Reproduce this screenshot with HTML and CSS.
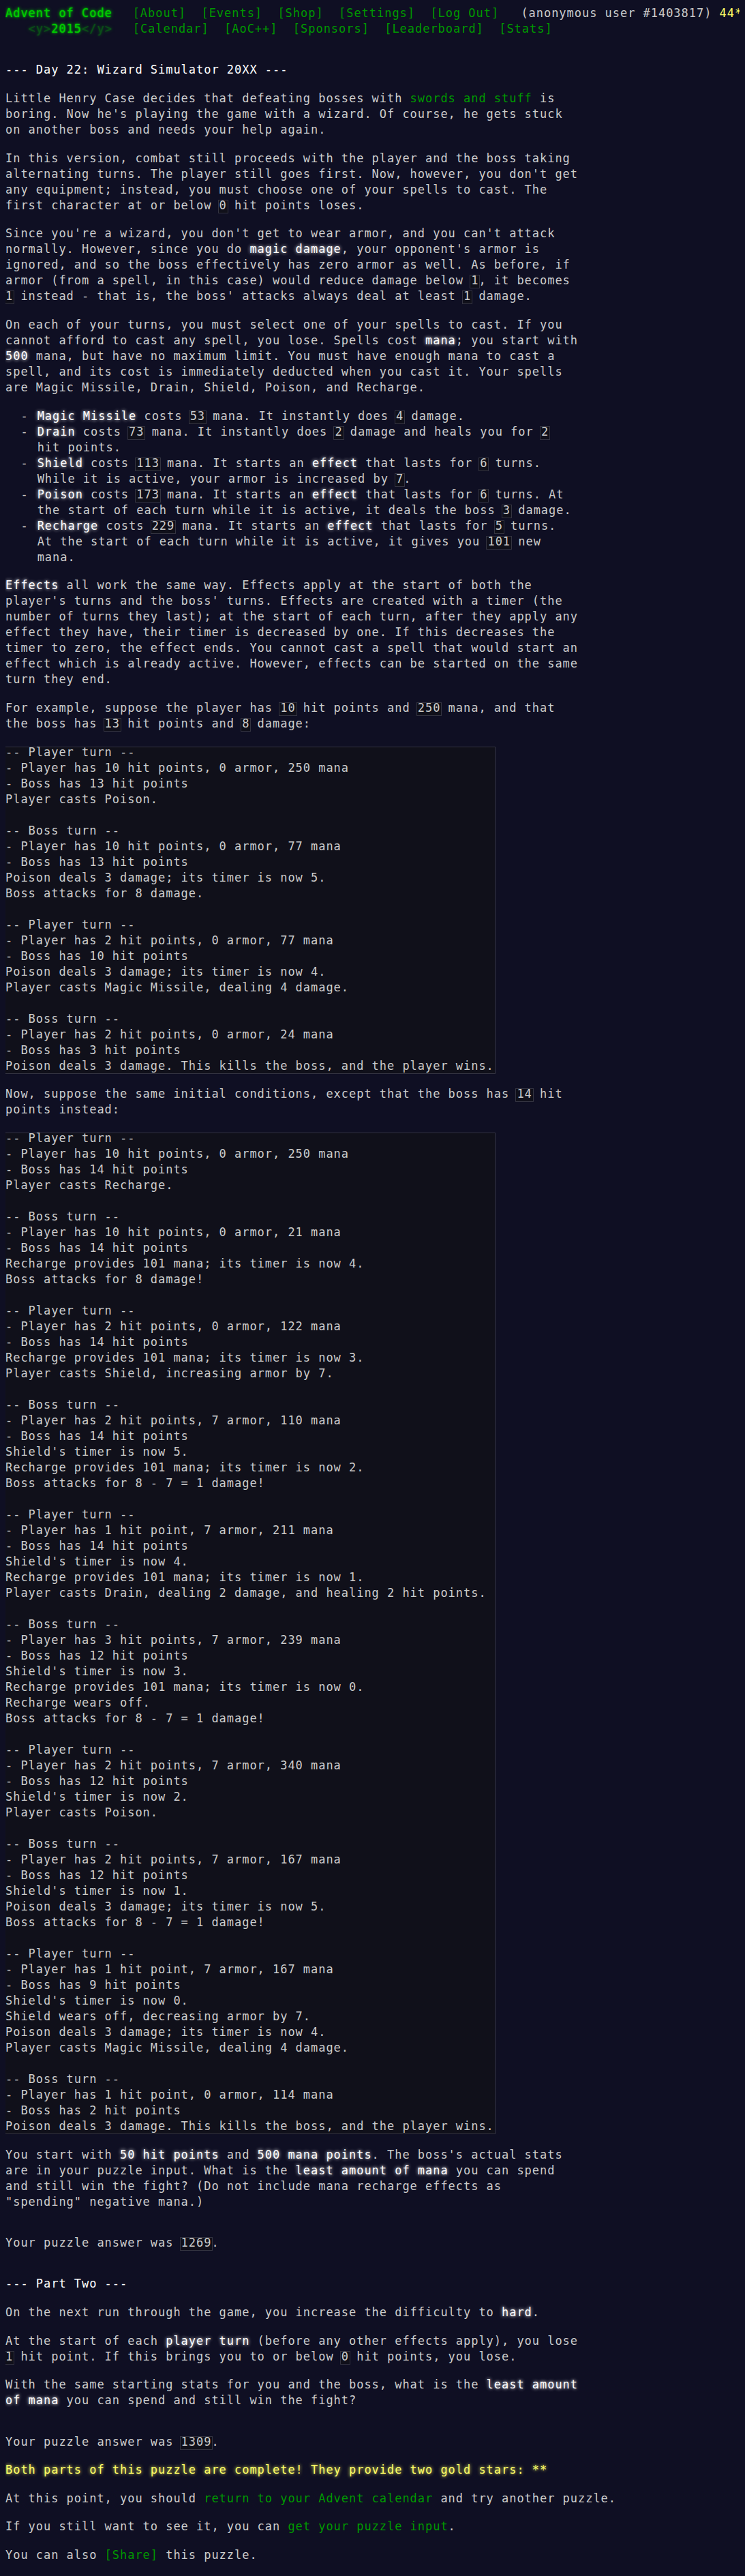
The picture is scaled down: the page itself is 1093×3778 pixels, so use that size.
FILE: index.html
```html
<!DOCTYPE html>
<html lang="en-us">
<head>
<meta charset="utf-8">
<title>Day 22 - Advent of Code 2015</title>
<link rel="stylesheet" href="styles.css">
</head>
<body>
<header class="site-header">
  <div class="header-row"><h1 class="title"><a href="#">Advent of Code</a></h1><nav class="nav"><ul><li><a href="#">[About]</a></li><li><a href="#">[Events]</a></li><li><a href="#">[Shop]</a></li><li><a href="#">[Settings]</a></li><li><a href="#">[Log Out]</a></li></ul></nav><div class="user">(anonymous user #1403817) <span class="star-count">44*</span></div></div>
  <div class="header-row"><h1 class="title">&nbsp;&nbsp;&nbsp;<span class="dim">&lt;y&gt;</span><a href="#">2015</a><span class="dim">&lt;/y&gt;</span></h1><nav class="nav"><ul><li><a href="#">[Calendar]</a></li><li><a href="#">[AoC++]</a></li><li><a href="#">[Sponsors]</a></li><li><a href="#">[Leaderboard]</a></li><li><a href="#">[Stats]</a></li></ul></nav></div>
</header>
<main>
<article class="day-desc"><h2>--- Day 22: Wizard Simulator 20XX ---</h2>
<p>Little Henry Case decides that defeating bosses with <a href="#">swords and stuff</a> is boring. Now he's playing the game with a wizard. Of course, he gets stuck on another boss and needs your help again.</p>
<p>In this version, combat still proceeds with the player and the boss taking alternating turns. The player still goes first. Now, however, you don't get any equipment; instead, you must choose one of your spells to cast. The first character at or below <code>0</code> hit points loses.</p>
<p>Since you're a wizard, you don't get to wear armor, and you can't attack normally. However, since you do <em>magic damage</em>, your opponent's armor is ignored, and so the boss effectively has zero armor as well. As before, if armor (from a spell, in this case) would reduce damage below <code>1</code>, it becomes <code>1</code> instead - that is, the boss' attacks always deal at least <code>1</code> damage.</p>
<p>On each of your turns, you must select one of your spells to cast. If you cannot afford to cast any spell, you lose. Spells cost <em>mana</em>; you start with <em>500</em> mana, but have no maximum limit. You must have enough mana to cast a spell, and its cost is immediately deducted when you cast it. Your spells are Magic Missile, Drain, Shield, Poison, and Recharge.</p>
<ul>
<li><em>Magic Missile</em> costs <code>53</code> mana. It instantly does <code>4</code> damage.</li>
<li><em>Drain</em> costs <code>73</code> mana. It instantly does <code>2</code> damage and heals you for <code>2</code> hit points.</li>
<li><em>Shield</em> costs <code>113</code> mana. It starts an <em>effect</em> that lasts for <code>6</code> turns. While it is active, your armor is increased by <code>7</code>.</li>
<li><em>Poison</em> costs <code>173</code> mana. It starts an <em>effect</em> that lasts for <code>6</code> turns. At the start of each turn while it is active, it deals the boss <code>3</code> damage.</li>
<li><em>Recharge</em> costs <code>229</code> mana. It starts an <em>effect</em> that lasts for <code>5</code> turns. At the start of each turn while it is active, it gives you <code>101</code> new mana.</li>
</ul>
<p><em>Effects</em> all work the same way. Effects apply at the start of both the player's turns and the boss' turns. Effects are created with a timer (the number of turns they last); at the start of each turn, after they apply any effect they have, their timer is decreased by one. If this decreases the timer to zero, the effect ends. You cannot cast a spell that would start an effect which is already active. However, effects can be started on the same turn they end.</p>
<p>For example, suppose the player has <code>10</code> hit points and <code>250</code> mana, and that the boss has <code>13</code> hit points and <code>8</code> damage:</p>
<pre><code>-- Player turn --
- Player has 10 hit points, 0 armor, 250 mana
- Boss has 13 hit points
Player casts Poison.

-- Boss turn --
- Player has 10 hit points, 0 armor, 77 mana
- Boss has 13 hit points
Poison deals 3 damage; its timer is now 5.
Boss attacks for 8 damage.

-- Player turn --
- Player has 2 hit points, 0 armor, 77 mana
- Boss has 10 hit points
Poison deals 3 damage; its timer is now 4.
Player casts Magic Missile, dealing 4 damage.

-- Boss turn --
- Player has 2 hit points, 0 armor, 24 mana
- Boss has 3 hit points
Poison deals 3 damage. This kills the boss, and the player wins.</code></pre>
<p>Now, suppose the same initial conditions, except that the boss has <code>14</code> hit points instead:</p>
<pre><code>-- Player turn --
- Player has 10 hit points, 0 armor, 250 mana
- Boss has 14 hit points
Player casts Recharge.

-- Boss turn --
- Player has 10 hit points, 0 armor, 21 mana
- Boss has 14 hit points
Recharge provides 101 mana; its timer is now 4.
Boss attacks for 8 damage!

-- Player turn --
- Player has 2 hit points, 0 armor, 122 mana
- Boss has 14 hit points
Recharge provides 101 mana; its timer is now 3.
Player casts Shield, increasing armor by 7.

-- Boss turn --
- Player has 2 hit points, 7 armor, 110 mana
- Boss has 14 hit points
Shield's timer is now 5.
Recharge provides 101 mana; its timer is now 2.
Boss attacks for 8 - 7 = 1 damage!

-- Player turn --
- Player has 1 hit point, 7 armor, 211 mana
- Boss has 14 hit points
Shield's timer is now 4.
Recharge provides 101 mana; its timer is now 1.
Player casts Drain, dealing 2 damage, and healing 2 hit points.

-- Boss turn --
- Player has 3 hit points, 7 armor, 239 mana
- Boss has 12 hit points
Shield's timer is now 3.
Recharge provides 101 mana; its timer is now 0.
Recharge wears off.
Boss attacks for 8 - 7 = 1 damage!

-- Player turn --
- Player has 2 hit points, 7 armor, 340 mana
- Boss has 12 hit points
Shield's timer is now 2.
Player casts Poison.

-- Boss turn --
- Player has 2 hit points, 7 armor, 167 mana
- Boss has 12 hit points
Shield's timer is now 1.
Poison deals 3 damage; its timer is now 5.
Boss attacks for 8 - 7 = 1 damage!

-- Player turn --
- Player has 1 hit point, 7 armor, 167 mana
- Boss has 9 hit points
Shield's timer is now 0.
Shield wears off, decreasing armor by 7.
Poison deals 3 damage; its timer is now 4.
Player casts Magic Missile, dealing 4 damage.

-- Boss turn --
- Player has 1 hit point, 0 armor, 114 mana
- Boss has 2 hit points
Poison deals 3 damage. This kills the boss, and the player wins.</code></pre>
<p>You start with <em>50 hit points</em> and <em>500 mana points</em>. The boss's actual stats are in your puzzle input. What is the <em>least amount of mana</em> you can spend and still win the fight? (Do not include mana recharge effects as "spending" negative mana.)</p>
</article>
<p>Your puzzle answer was <code>1269</code>.</p>
<article class="day-desc"><h2>--- Part Two ---</h2>
<p>On the next run through the game, you increase the difficulty to <em>hard</em>.</p>
<p>At the start of each <em>player turn</em> (before any other effects apply), you lose <code>1</code> hit point. If this brings you to or below <code>0</code> hit points, you lose.</p>
<p>With the same starting stats for you and the boss, what is the <em>least amount of mana</em> you can spend and still win the fight?</p>
</article>
<p>Your puzzle answer was <code>1309</code>.</p>
<p class="day-success">Both parts of this puzzle are complete! They provide two gold stars: **</p>
<p>At this point, you should <a href="#">return to your Advent calendar</a> and try another puzzle.</p>
<p>If you still want to see it, you can <a href="#">get your puzzle input</a>.</p>
<p>You can also <a href="#" class="share">[Share]</a> this puzzle.</p>
</main>
</body>
</html>
```
FILE: styles.css
```css
body {
  margin: 8px;
  background: #0f0f23;
  color: #cccccc;
  font-family: "DejaVu Sans Mono", "Liberation Mono", monospace;
  font-size: 17px;
  letter-spacing: 0.965px;
  line-height: 23px;
}

a {
  color: #009900;
  text-decoration: none;
}

.site-header {
  white-space: nowrap;
  margin-bottom: 37.33px;
}

.header-row {
  display: block;
}

.title {
  display: inline-block;
  margin: 0;
  padding-right: 18.67px;
  font-size: 17px;
  font-weight: normal;
}

.title a,
.title .dim {
  color: #00cc00;
  text-shadow: 0 0 2px #00cc00, 0 0 5px #00cc00;
}

.title .dim {
  opacity: 0.33;
  white-space: pre;
}

.nav {
  display: inline-block;
}

.nav ul {
  list-style: none;
  margin: 0;
  padding: 0;
  display: inline-block;
}

.nav li {
  display: inline-block;
  padding: 0 11.2px;
}

.user {
  display: inline-block;
  padding-left: 21px;
}

.star-count {
  color: #ffff66;
}

.day-desc {
  width: 840.5px;
  margin: 37.33px 0;
}

.day-desc h2 {
  color: #ffffff;
  font-size: 17px;
  font-weight: normal;
  margin: 18.67px 0;
  white-space: nowrap;
}

p {
  margin: 18.67px 0;
}

em {
  color: #ffffff;
  font-style: normal;
  text-shadow: 0 0 5px #ffffff;
}

.day-desc a {
  white-space: nowrap;
}

.day-desc ul {
  list-style: none;
  margin: 18.67px 0;
  padding: 0;
}

.day-desc li {
  position: relative;
  padding-left: 46.67px;
}

.day-desc li::before {
  content: "\00a0\00a0-\00a0";
  position: absolute;
  left: 0;
}

code {
  position: relative;
  display: inline-block;
  margin: 0;
  padding: 0;
  font: inherit;
  white-space: nowrap;
}

code::before {
  content: "";
  position: absolute;
  z-index: -1;
  left: -2px;
  right: -2px;
  top: 3px;
  bottom: 0;
  border: 1px solid #333340;
  background: #10101a;
}

pre {
  margin: 18.67px 0;
  font: inherit;
  white-space: pre;
}

pre code {
  white-space: pre;
}

.day-success {
  color: #ffff66;
  text-shadow: 0 0 5px #ffff66;
}
```
